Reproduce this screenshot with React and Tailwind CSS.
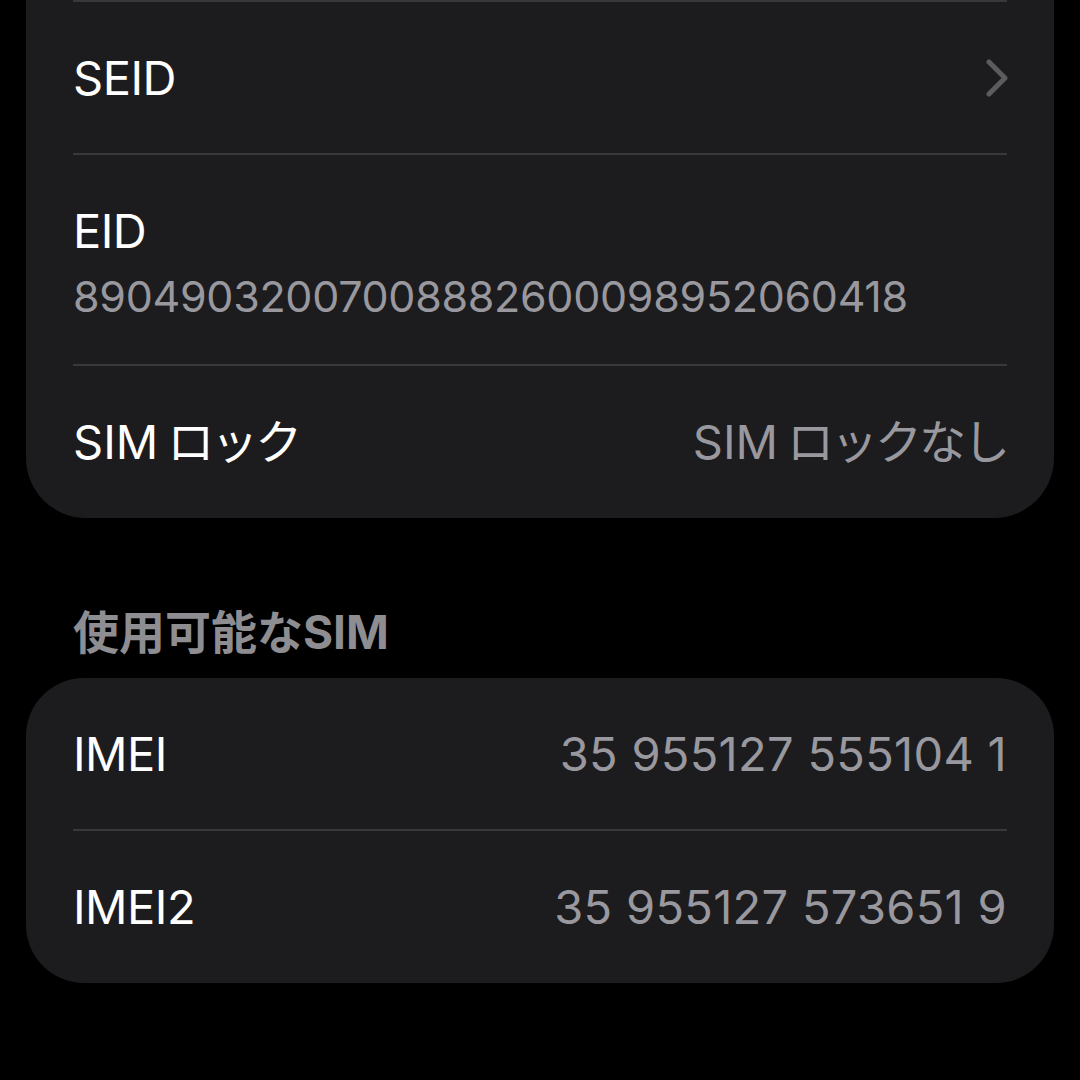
export default function App() {
  const font = { fontFamily: "Inter, 'Noto Sans CJK JP', sans-serif" };

  return (
    <div className="min-h-screen w-[1080px] bg-black pb-[97px]" style={font}>
      {/* Top card: SEID / EID / SIM lock */}
      <div className="mx-[26px] rounded-b-[60px] bg-[#1c1c1e] px-[47px]">
        <div className="h-[2px] bg-[#38383a]" />
        <div className="flex h-[151px] items-center justify-between">
          <span className="text-[47px] leading-[56px] tracking-[-0.5px] text-white">SEID</span>
          <svg width="22" height="38" viewBox="0 0 22 38" fill="none" className="mr-[-1px]">
            <path d="M3 3l16 16L3 35" stroke="#5b5b60" strokeWidth="5" strokeLinecap="round" strokeLinejoin="round" />
          </svg>
        </div>
        <div className="h-[2px] bg-[#38383a]" />
        <div className="flex h-[209px] flex-col gap-[12px] pt-[48px]">
          <span className="text-[47px] leading-[56px] tracking-[-0.5px] text-white">EID</span>
          <span className="text-[43px] leading-[50px] tracking-[-0.3px] text-[#98989e]">
            89049032007008882600098952060418
          </span>
        </div>
        <div className="h-[2px] bg-[#38383a]" />
        <div className="flex h-[152px] items-center justify-between">
          <span className="text-[47px] leading-[56px] text-white">
            SIM<span className="ml-[9px] tracking-[-3px]">ロック</span>
          </span>
          <span className="text-[47px] leading-[56px] text-[#98989e]">
            SIM<span className="ml-[9px] tracking-[-3px]">ロックなし</span>
          </span>
        </div>
      </div>

      {/* Section header */}
      <div className="px-[73px] pt-[90px] pb-[22px]">
        <span className="text-[46px] font-bold leading-[48px] text-[#8d8d92]">使用可能なSIM</span>
      </div>

      {/* Bottom card: IMEI */}
      <div className="mx-[26px] rounded-[58px] bg-[#1c1c1e] px-[47px]">
        <div className="flex h-[151px] items-center justify-between">
          <span className="text-[47px] leading-[56px] tracking-[-0.5px] text-white">IMEI</span>
          <span className="text-[47px] leading-[56px] tracking-[0.3px] text-[#98989e]">35 955127 555104 1</span>
        </div>
        <div className="h-[2px] bg-[#38383a]" />
        <div className="flex h-[152px] items-center justify-between">
          <span className="text-[47px] leading-[56px] tracking-[-0.5px] text-white">IMEI2</span>
          <span className="text-[47px] leading-[56px] tracking-[0.3px] text-[#98989e]">35 955127 573651 9</span>
        </div>
      </div>
    </div>
  );
}
